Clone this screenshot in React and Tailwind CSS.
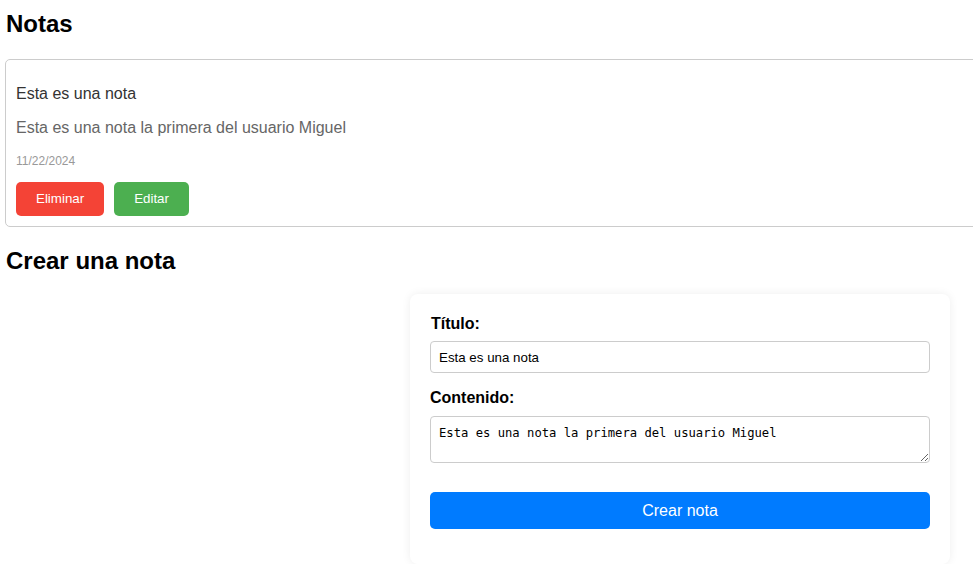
import { useState } from 'react';

const notes = [
  {
    id: 1,
    title: 'Esta es una nota',
    content: 'Esta es una nota la primera del usuario Miguel',
    date: '11/22/2024',
  },
];

const NoteCard = ({ note }) => (
  <div className="border border-[#ccc] rounded-[5px] px-[10px] pb-[10px] pt-[25px]">
    <p className="text-[16px] leading-[18px] text-[#333]">{note.title}</p>
    <p className="mt-4 text-[16px] leading-[18px] text-[#666]">{note.content}</p>
    <p className="mt-[17px] text-[12px] leading-[14px] text-[#999]">{note.date}</p>
    <div className="mt-[14px] flex gap-[10px]">
      <button className="h-[34px] px-5 rounded-[5px] bg-[#f44336] text-white text-[13.33px]">
        Eliminar
      </button>
      <button className="h-[34px] px-5 rounded-[5px] bg-[#4caf50] text-white text-[13.33px]">
        Editar
      </button>
    </div>
  </div>
);

const NoteForm = () => {
  const [title, setTitle] = useState('Esta es una nota');
  const [content, setContent] = useState('Esta es una nota la primera del usuario Miguel');

  return (
    <form
      className="mx-auto w-[540px] bg-white rounded-lg px-5 pt-[21px] pb-[35px] shadow-[0_0_10px_rgba(0,0,0,0.07)]"
      onSubmit={(e) => e.preventDefault()}
    >
      <label className="block text-[16px] leading-[18px] font-bold text-black pl-px">Título:</label>
      <input
        className="mt-2 block w-full h-[32px] px-2 border border-[#ccc] rounded-[4px] text-[13.33px] text-black outline-none"
        value={title}
        onChange={(e) => setTitle(e.target.value)}
      />
      <label className="mt-4 block text-[16px] leading-[18px] font-bold text-black">Contenido:</label>
      <textarea
        className="mt-[9px] block w-full h-[47px] px-2 pt-[9px] pb-[3px] border border-[#ccc] rounded-[4px] text-[12.2px] leading-[15px] text-black outline-none font-['DejaVu_Sans_Mono',monospace]"
        value={content}
        onChange={(e) => setContent(e.target.value)}
      />
      <button
        type="submit"
        className="mt-[29px] block w-full h-[37px] rounded-[5px] bg-[#007bff] text-white text-[16px]"
      >
        Crear nota
      </button>
    </form>
  );
};

export default function App() {
  return (
    <div className="w-[1360px] px-[5px] bg-white font-['Liberation_Sans',Arial,sans-serif]">
      <h2 className="pt-[10px] text-[24px] leading-[27px] font-bold text-black pl-px">Notas</h2>
      <div className="mt-[22px] flex flex-col gap-4">
        {notes.map((note) => (
          <NoteCard key={note.id} note={note} />
        ))}
      </div>
      <h2 className="mt-5 text-[24px] leading-[27px] font-bold text-black pl-px">Crear una nota</h2>
      <div className="mt-5">
        <NoteForm />
      </div>
    </div>
  );
}
